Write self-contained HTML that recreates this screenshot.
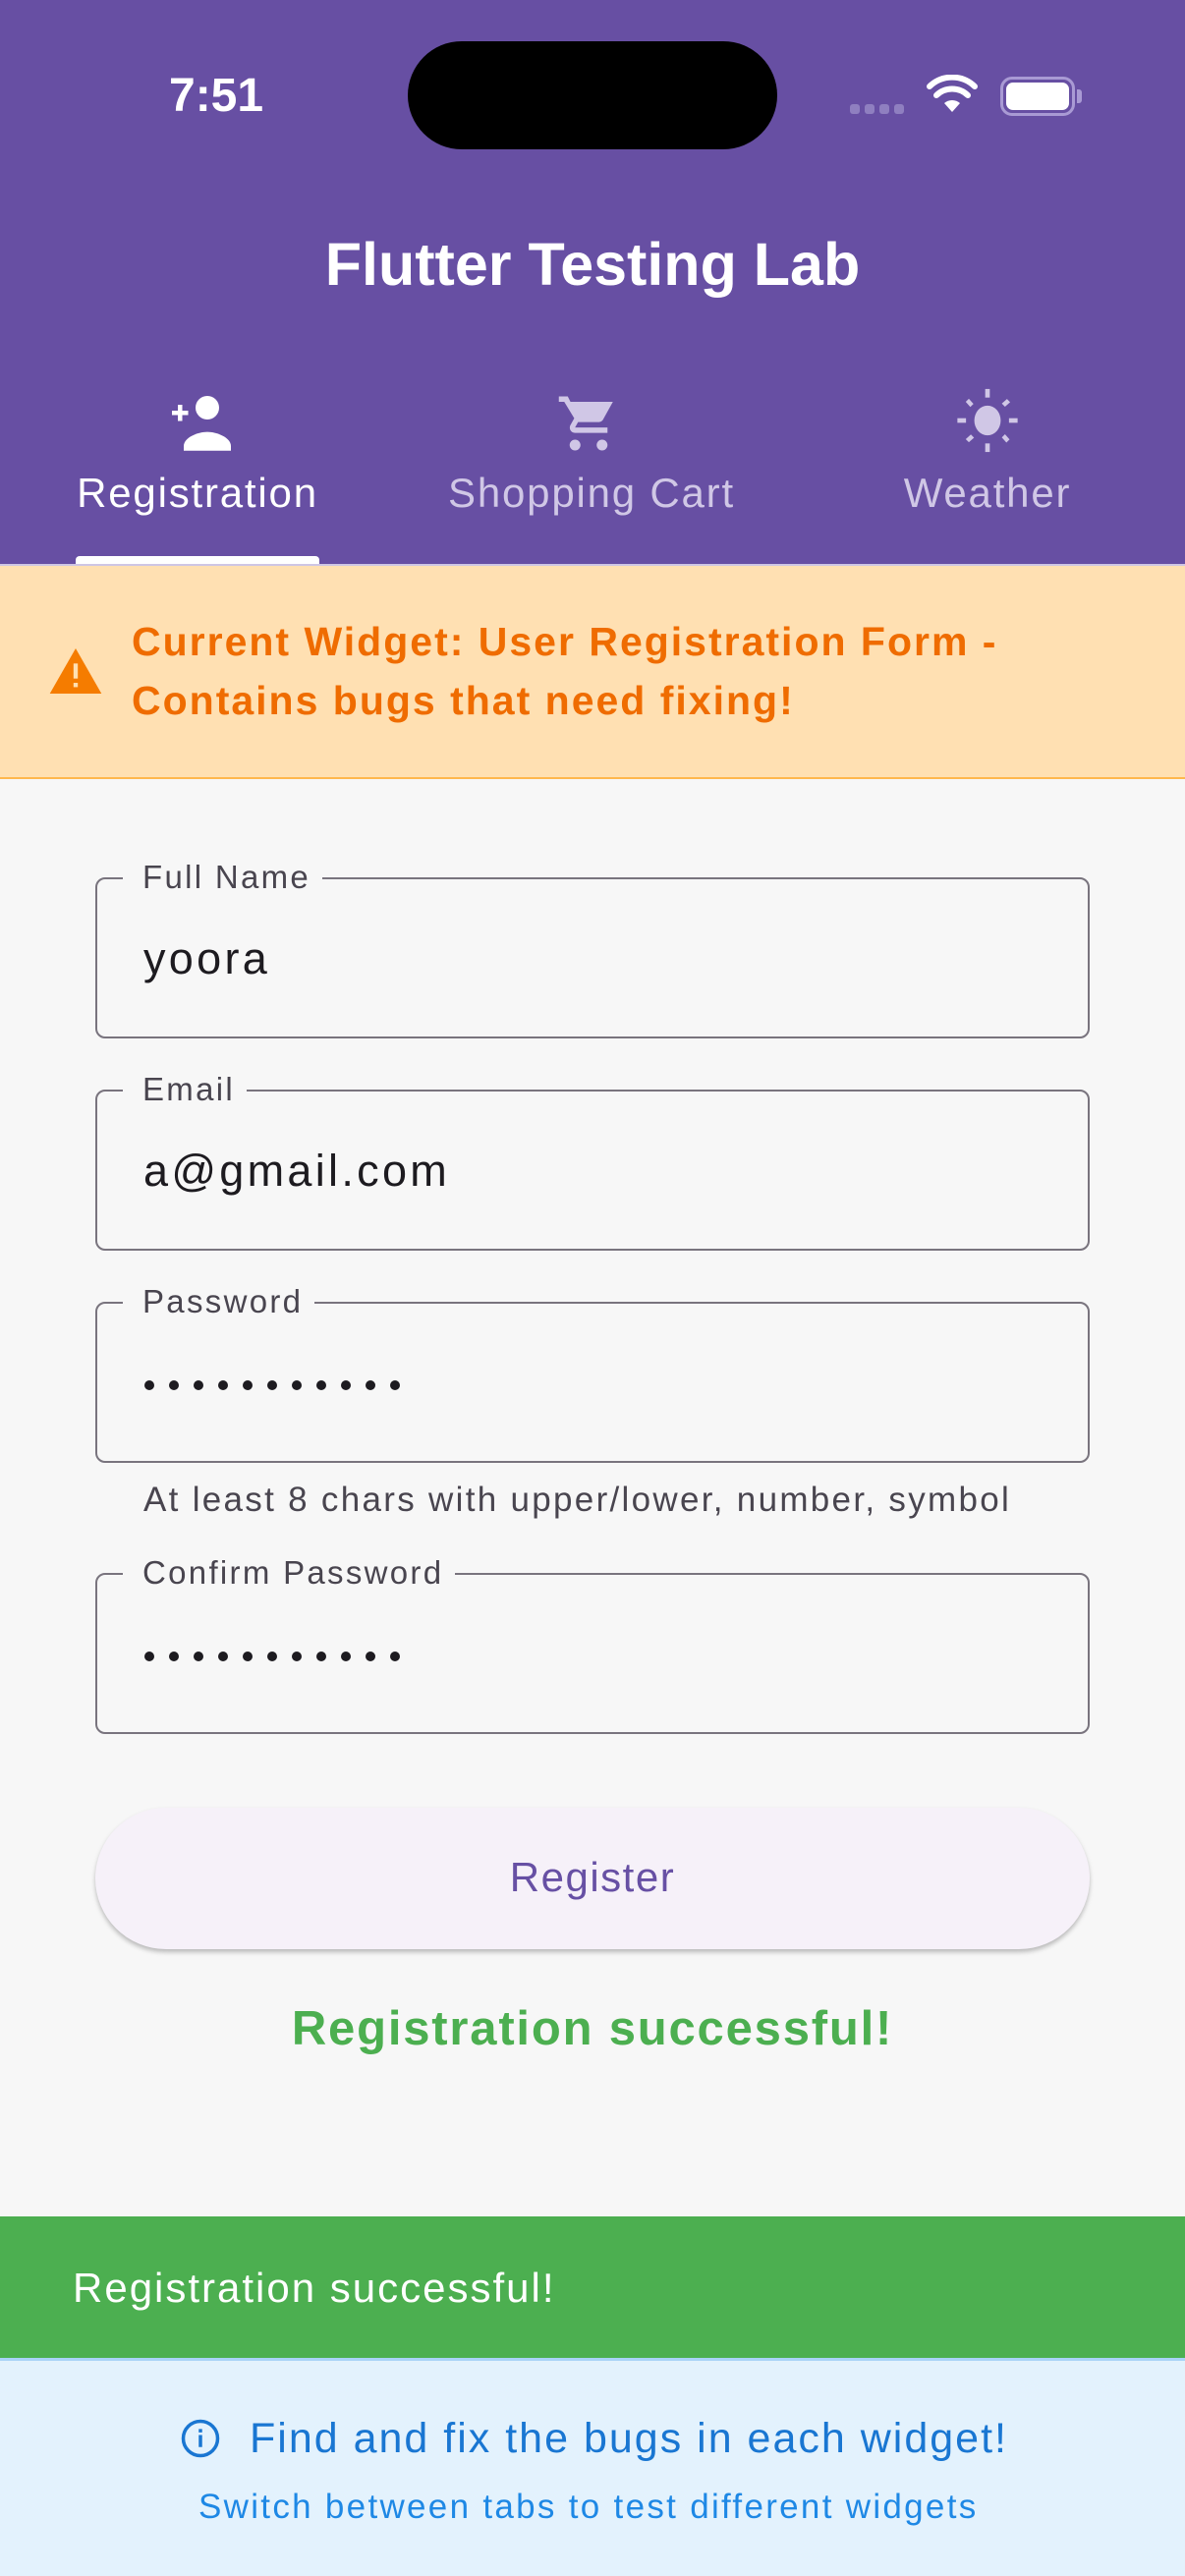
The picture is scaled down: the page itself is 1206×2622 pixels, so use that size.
<!DOCTYPE html>
<html><head><meta charset="utf-8"><style>
*{margin:0;padding:0;box-sizing:border-box}
body{width:1206px;height:2622px;background:#f7f7f7;font-family:"Liberation Sans",sans-serif;position:relative;overflow:hidden}
.a{position:absolute}
.hdr{left:0;top:0;width:1206px;height:574px;background:#674fa3}
.t{white-space:nowrap}
.field{position:absolute;left:97px;width:1012px;height:164px;border:2px solid #79747e;border-radius:10px}
.lbl{position:absolute;left:26px;top:-20px;background:#f7f7f7;padding:0 12px 0 20px;font-size:33px;color:#49454f;letter-spacing:2.3px;line-height:36px}
.val{position:absolute;left:47px;top:56px;font-size:45px;color:#1d1b20;letter-spacing:3.3px;line-height:50px}
.dots{position:absolute;left:48px;top:78px;display:flex;gap:15px}
.dots i{width:10px;height:10px;border-radius:50%;background:#1d1b20;display:block}
</style></head><body>
<div class="a hdr"></div>
<div class="a t" style="left:172px;top:70px;font-size:48px;font-weight:bold;color:#fff">7:51</div>
<div class="a" style="left:415px;top:42px;width:376px;height:110px;border-radius:55px;background:#000"></div>
<div class="a" style="left:865px;top:106px;display:flex;gap:5px"><span style="width:10px;height:10px;border-radius:3px;background:#8f7fc0"></span><span style="width:10px;height:10px;border-radius:3px;background:#8f7fc0"></span><span style="width:10px;height:10px;border-radius:3px;background:#8f7fc0"></span><span style="width:10px;height:10px;border-radius:3px;background:#8f7fc0"></span></div>
<svg class="a" style="left:943px;top:76px" width="52" height="40" viewBox="0 0 52 40"><path d="M26 38 L18 29 A12 12 0 0 1 34 29 Z" fill="#fff"/><path d="M10 21 A23 23 0 0 1 42 21" stroke="#fff" stroke-width="6" fill="none" stroke-linecap="round"/><path d="M3 12 A33 33 0 0 1 49 12" stroke="#fff" stroke-width="6" fill="none" stroke-linecap="round"/></svg>
<div class="a" style="left:1018px;top:78px;width:76px;height:40px;border:3px solid #a99ad4;border-radius:12px"></div>
<div class="a" style="left:1024px;top:84px;width:64px;height:28px;background:#fff;border-radius:7px"></div>
<div class="a" style="left:1096px;top:91px;width:5px;height:14px;background:#a99ad4;border-radius:0 3px 3px 0"></div>
<div class="a t" style="left:0;width:1206px;text-align:center;top:234px;font-size:61px;font-weight:bold;color:#fff;letter-spacing:0px">Flutter Testing Lab</div>
<svg class="a" style="left:166px;top:400px" width="72" height="60" viewBox="0 0 24 20"><path d="M3 6h2V4h1.5v2h2v1.5h-2v2H5v-2H3z" fill="#fff"/><circle cx="15" cy="5" r="4" fill="#fff"/><path d="M7 18c0-3 5-4.8 8-4.8s8 1.8 8 4.8v1.6H7z" fill="#fff"/></svg>
<svg class="a" style="left:566px;top:398px" width="66" height="66" viewBox="0 0 24 24"><path d="M1 2h3.3l1 2H21l-3.6 6.5c-.3.6-1 1-1.7 1H8.1L7 13.5h12v2H7c-1.5 0-2.4-1.6-1.7-2.9l1.4-2.5L3 4H1z" fill="#d0c7e6"/><circle cx="7" cy="20" r="2" fill="#d0c7e6"/><circle cx="17" cy="20" r="2" fill="#d0c7e6"/></svg>
<svg class="a" style="left:970px;top:393px" width="70" height="70" viewBox="0 0 24 24" fill="#d0c7e6"><ellipse cx="12" cy="12" rx="4.6" ry="5.2"/><rect x="11.2" y="1" width="1.6" height="3"/><rect x="11.2" y="20" width="1.6" height="3"/><rect x="1.5" y="11.2" width="3" height="1.6"/><rect x="19.5" y="11.2" width="3" height="1.6"/><path d="M4.4 5.5l1.1-1.1 1.6 1.8-1.1 1.1zM17 17.9l1.1-1.1 1.6 1.8-1.1 1.1zM4.4 18.5l1.8-1.6 1.1 1.1-1.8 1.6zM17 6.1l1.8-1.6 1.1 1.1-1.8 1.6z"/></svg>
<div class="a t" style="left:21px;width:360px;text-align:center;top:478px;font-size:42px;color:#fff;letter-spacing:1.8px">Registration</div>
<div class="a t" style="left:382px;width:440px;text-align:center;top:478px;font-size:42px;color:#d0c7e6;letter-spacing:1.8px">Shopping Cart</div>
<div class="a t" style="left:845px;width:320px;text-align:center;top:478px;font-size:42px;color:#d0c7e6;letter-spacing:1.8px">Weather</div>
<div class="a" style="left:77px;top:566px;width:248px;height:8px;background:#fff;border-radius:4px 4px 0 0"></div>
<div class="a" style="left:0;top:574px;width:1206px;height:219px;background:#ffe0b2;border-top:2px solid #cfc6e4;border-bottom:2px solid #ffb74d"></div>
<svg class="a" style="left:50px;top:660px" width="54" height="46" viewBox="0 0 24 21"><path d="M12 0L24 21H0z" fill="#f57c00"/><rect x="11" y="7" width="2" height="7" fill="#ffe0b2"/><rect x="11" y="16" width="2" height="2" fill="#ffe0b2"/></svg>
<div class="a t" style="left:134px;top:623px;font-size:41px;font-weight:bold;color:#ef6c00;line-height:60px;letter-spacing:2px">Current Widget: User Registration Form -<br>Contains bugs that need fixing!</div>
<div class="field" style="top:893px"><div class="lbl">Full Name</div><div class="val">yoora</div></div>
<div class="field" style="top:1109px"><div class="lbl">Email</div><div class="val">a@gmail.com</div></div>
<div class="field" style="top:1325px"><div class="lbl">Password</div><div class="dots"><i></i><i></i><i></i><i></i><i></i><i></i><i></i><i></i><i></i><i></i><i></i></div></div>
<div class="a t" style="left:146px;top:1507px;font-size:35px;color:#49454f;letter-spacing:2.3px">At least 8 chars with upper/lower, number, symbol</div>
<div class="field" style="top:1601px"><div class="lbl">Confirm Password</div><div class="dots"><i></i><i></i><i></i><i></i><i></i><i></i><i></i><i></i><i></i><i></i><i></i></div></div>
<div class="a" style="left:97px;top:1840px;width:1012px;height:144px;border-radius:72px;background:#f6f1f9;box-shadow:0 3px 5px rgba(0,0,0,0.25)"></div>
<div class="a t" style="left:0;width:1206px;text-align:center;top:1887px;font-size:42px;color:#6750a4;letter-spacing:1.5px">Register</div>
<div class="a t" style="left:0;width:1206px;text-align:center;top:2037px;font-size:49px;font-weight:bold;color:#4caf50;letter-spacing:1.8px">Registration successful!</div>
<div class="a" style="left:0;top:2256px;width:1206px;height:144px;background:#4caf50"></div>
<div class="a t" style="left:74px;top:2305px;font-size:42px;color:#fff;letter-spacing:2px">Registration successful!</div>
<div class="a" style="left:0;top:2400px;width:1206px;height:222px;background:#e3f2fd;border-top:3px solid #a9d3f7"></div>
<svg class="a" style="left:183px;top:2461px" width="42" height="42" viewBox="0 0 24 24"><circle cx="12" cy="12" r="10" stroke="#1976d2" stroke-width="2" fill="none"/><rect x="11" y="10" width="2" height="7" fill="#1976d2"/><rect x="11" y="6.5" width="2" height="2" fill="#1976d2"/></svg>
<div class="a t" style="left:254px;top:2458px;font-size:43px;color:#1976d2;letter-spacing:2px">Find and fix the bugs in each widget!</div>
<div class="a t" style="left:202px;top:2532px;font-size:35px;color:#1e88e5;letter-spacing:2.3px">Switch between tabs to test different widgets</div>
</body></html>
